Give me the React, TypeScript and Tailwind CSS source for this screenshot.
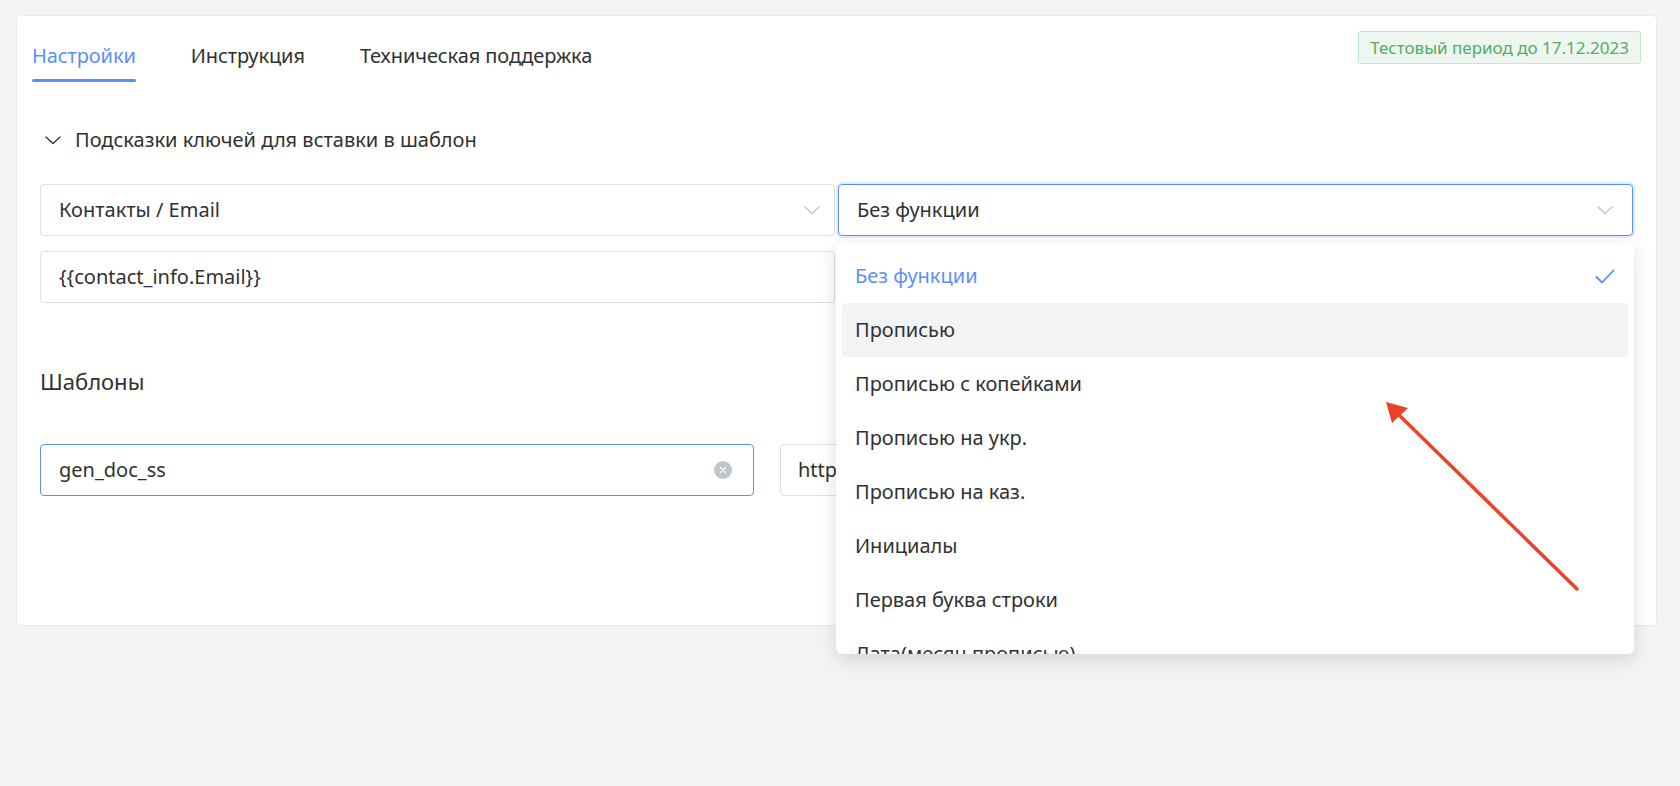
import React from "react";

const font = { fontFamily: '"Noto Sans", "Open Sans", sans-serif' };

function Chevron({ className = "", color = "#c0c4cc" }: { className?: string; color?: string }) {
  return (
    <svg className={className} width="16" height="9" viewBox="0 0 16 9" fill="none">
      <path d="M1 1 L8 7.5 L15 1" stroke={color} strokeWidth="1.3" strokeLinecap="round" strokeLinejoin="round" />
    </svg>
  );
}

const items = [
  "Без функции",
  "Прописью",
  "Прописью с копейками",
  "Прописью на укр.",
  "Прописью на каз.",
  "Инициалы",
  "Первая буква строки",
  "Дата(месяц прописью)",
];

export default function App() {
  return (
    <div className="relative h-[786px] w-full overflow-hidden bg-[#f4f4f5] pt-[15px] text-[#303133]" style={font}>
      <div className="ml-[16px] h-[611px] w-[1641px] rounded-[4px] border border-[#ebebeb] bg-white">
        {/* header */}
        <div className="flex items-start justify-between px-[15px]">
          <div className="flex gap-[55px]">
            {["Настройки", "Инструкция", "Техническая поддержка"].map((t, i) => (
              <div key={t} className="flex flex-col pt-[26px]">
                <span className={`h-[28px] text-[20px] leading-[28px] tracking-[-0.1px] ${i === 0 ? "text-[#5b8ff9]" : "text-[#303133]"}`}>{t}</span>
                <div className={`mt-[9px] h-[3px] rounded-full ${i === 0 ? "bg-[#5b8ff9]" : "bg-transparent"}`} />
              </div>
            ))}
          </div>
          <div className="mt-[15px] flex h-[33px] items-center rounded-[3px] border border-[#c4e6cb] bg-[#edf7ef] px-[11px] text-[17px] text-[#4fae67]">
            Тестовый период до 17.12.2023
          </div>
        </div>

        <div className="px-[23px]">
          {/* collapse */}
          <div className="mt-[44px] flex h-[28px] items-center gap-[14px] pl-[5px]">
            <Chevron color="#303133" />
            <span className="text-[20px] leading-[28px]">Подсказки ключей для вставки в шаблон</span>
          </div>

          <div className="mt-[30px] grid grid-cols-2 gap-x-[3px] gap-y-[15px]">
            <div className="flex h-[52px] items-center justify-between rounded-[4px] border border-[#dcdfe6] pl-[18px] pr-[14px] text-[20px]">
              <span>Контакты / Email</span>
              <Chevron />
            </div>
            <div className="relative">
              <div className="flex h-[52px] items-center justify-between rounded-[4px] border border-[#5b8ff9] pl-[18px] pr-[19px] text-[20px] shadow-[0_0_0_2px_rgba(91,143,249,0.18)]">
                <span>Без функции</span>
                <Chevron />
              </div>
            </div>
            <div className="flex h-[52px] items-center rounded-[4px] border border-[#dcdfe6] px-[18px] text-[20px]">
              {"{{contact_info.Email}}"}
            </div>
            <div />
          </div>

          <div className="mt-[63px] h-[30px] text-[22px] leading-[30px]">Шаблоны</div>

          <div className="mt-[48px] flex gap-[26px]">
            <div className="flex h-[52px] w-[714px] items-center justify-between rounded-[4px] border border-[#5b8ff9] pl-[18px] pr-[21px] text-[20px]">
              <span>gen_doc_ss</span>
              <span className="flex h-[18px] w-[18px] items-center justify-center rounded-full bg-[#c0c4cc]">
                <svg width="8" height="8" viewBox="0 0 8 8">
                  <path d="M1.5 1.5 L6.5 6.5 M6.5 1.5 L1.5 6.5" stroke="white" strokeWidth="1.4" strokeLinecap="round" />
                </svg>
              </span>
            </div>
            <div className="flex h-[52px] flex-1 items-center overflow-hidden rounded-[4px] border border-[#dcdfe6] px-[17px] text-[20px]">
              <span className="w-[40px] shrink-0 overflow-hidden whitespace-nowrap">https://docs.google.com/document/d/</span>
            </div>
          </div>
        </div>
      </div>

      {/* dropdown overlay */}
      <div className="absolute left-[836px] top-[243px] h-[411px] w-[798px] overflow-hidden rounded-[6px] bg-white px-[6px] pt-[6px] shadow-[0_6px_20px_rgba(0,0,0,0.13)]">
        {items.map((t, i) => (
          <div
            key={t}
            className={`flex h-[54px] items-center justify-between rounded-[4px] px-[13px] text-[20px] ${
              i === 0 ? "text-[#5b8ff9]" : "text-[#303133]"
            } ${i === 1 ? "bg-[#f2f3f5]" : ""}`}
          >
            <span>{t}</span>
            {i === 0 && (
              <svg width="20" height="15" viewBox="0 0 20 15" fill="none">
                <path d="M1.5 8 L7 13.5 L18.5 1.5" stroke="#5b8ff9" strokeWidth="1.8" strokeLinecap="round" strokeLinejoin="round" />
              </svg>
            )}
          </div>
        ))}
      </div>

      {/* red annotation arrow */}
      <svg className="pointer-events-none absolute left-0 top-0" width="1680" height="786">
        <line x1="1577" y1="589" x2="1398" y2="414" stroke="#ec4229" strokeWidth="3.5" strokeLinecap="round" />
        <polygon points="1386,402 1408,408 1392,423" fill="#ec4229" />
      </svg>
    </div>
  );
}
